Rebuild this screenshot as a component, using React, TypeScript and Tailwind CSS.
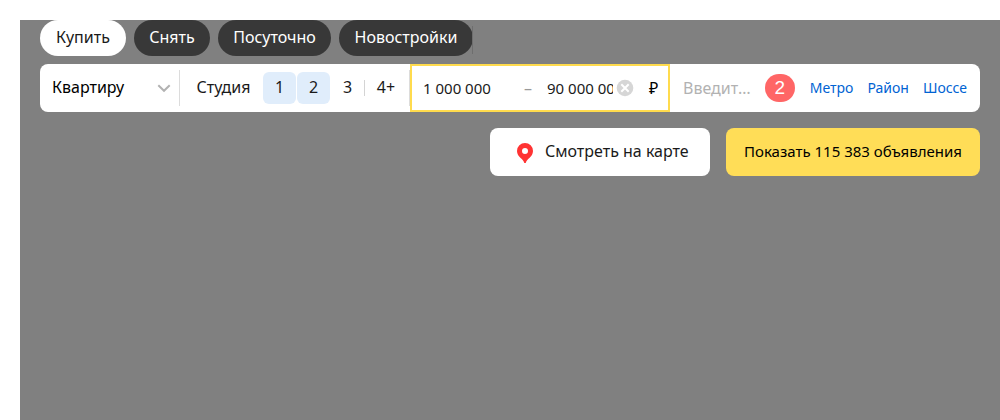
import { useState } from "react";

const deals = [
  { label: "Купить", size: "w-[86px]" },
  { label: "Снять", size: "w-[76px]" },
  { label: "Посуточно", size: "w-[113px]" },
  { label: "Новостройки", size: "w-[134px]" },
];
const rooms = [
  { label: "Студия", size: "w-[79px]" },
  { label: "1", size: "mr-px w-[33px]" },
  { label: "2", size: "mr-px w-[33px]" },
  { label: "3", size: "w-[33px]" },
  { label: "4+", size: "w-[42px]" },
];
const places = ["Метро", "Район", "Шоссе"];

function DealTabs() {
  const [active, setActive] = useState("Купить");
  return (
    <div className="flex">
      <div className="flex gap-2">
        {deals.map(({ label, size }) => (
          <button
            key={label}
            type="button"
            aria-pressed={label === active}
            onClick={() => setActive(label)}
            className={`h-9 rounded-full pb-0.5 whitespace-nowrap ${size} ${
              label === active ? "bg-white text-[#1a1a1a]" : "bg-[#383838] text-white"
            }`}
          >
            {label}
          </button>
        ))}
      </div>
      <span className="-ml-px mt-1.5 h-7 w-px bg-[#6e6e6e]" />
    </div>
  );
}

function TypeSelect() {
  return (
    <div className="relative flex w-[140px] shrink-0 items-center">
      <select
        aria-label="Тип недвижимости"
        className="h-12 w-full appearance-none bg-transparent pb-0.5 pl-3 text-black outline-none"
      >
        <option>Квартиру</option>
        <option>Комнату</option>
        <option>Дом</option>
      </select>
      <svg className="pointer-events-none absolute right-2 h-4 w-4" viewBox="0 0 16 16" fill="none" stroke="#b2b2b2" strokeWidth="2">
        <path d="M2.3 5.3 8 10.8l5.7-5.5" />
      </svg>
      <span className="absolute right-0 h-9 w-px bg-[#dcdcdc]" />
    </div>
  );
}

function RoomPicker() {
  const [picked, setPicked] = useState(["1", "2"]);
  const toggle = (label: string) =>
    setPicked(picked.includes(label) ? picked.filter((p) => p !== label) : [...picked, label]);
  return (
    <div className="relative flex w-[230px] shrink-0 items-center pl-1">
      {rooms.map(({ label, size }) => (
        <div key={label} className="flex items-center">
          {label === "4+" && <span className="h-4 w-px bg-[#d4d4d4]" />}
          <button
            type="button"
            aria-pressed={picked.includes(label)}
            onClick={() => toggle(label)}
            className={`h-8 rounded-md pb-0.5 text-[#1a1a1a] ${size} ${picked.includes(label) ? "bg-[#e0edfb]" : ""}`}
          >
            {label}
          </button>
        </div>
      ))}
      <span className="absolute right-0 h-9 w-px bg-[#dcdcdc]" />
    </div>
  );
}

function PriceRange() {
  return (
    <div className="flex w-[260px] shrink-0 items-center border-2 border-[#ffdb4d] pl-[11px] text-[#1a1a1a]">
      <input
        aria-label="Цена от"
        defaultValue="1 000 000"
        className="h-11 w-[101px] bg-transparent text-[15px] outline-none"
      />
      <span className="w-[23px] text-[#999999]">–</span>
      <input
        aria-label="Цена до"
        defaultValue="90 000 000"
        className="h-11 w-[66px] bg-transparent text-[15px] outline-none"
      />
      <button type="button" aria-label="Очистить цену" className="ml-1">
        <svg className="h-4 w-4 overflow-visible" viewBox="0 0 16 16">
          <circle cx="8" cy="8" r="8.300" fill="#d6d6d6" />
          <path d="m4.300 4.300 7.400 7.400m0-7.400-7.400 7.400" stroke="#fff" strokeWidth="2" />
        </svg>
      </button>
      <span className="ml-4 text-black">₽</span>
    </div>
  );
}

function PlaceSearch() {
  return (
    <div className="flex min-w-0 flex-1 items-center px-[13px]">
      <input
        aria-label="Место"
        placeholder="Введите адрес"
        className="h-12 w-0 min-w-0 flex-1 bg-transparent text-ellipsis outline-none placeholder:text-[#b2b2b2]"
      />
      <span className="ml-3.5 flex h-7 w-[30px] items-center justify-center rounded-full bg-[#ff6666] font-['Liberation_Sans',sans-serif] text-[19px] leading-7 text-white">
        2
      </span>
      <div className="ml-[15px] flex gap-3.5 text-sm text-[#0063d3]">
        {places.map((place) => (
          <a key={place} href="#">
            {place}
          </a>
        ))}
      </div>
    </div>
  );
}

export default function App() {
  return (
    <div className="flex min-h-screen bg-white pt-5 pl-5 font-['Noto_Sans',sans-serif] text-base">
      <main className="flex-1 bg-[#808080] px-5">
        <DealTabs />
        <form className="mt-2" onSubmit={(event) => event.preventDefault()}>
          <div className="flex h-12 rounded-lg bg-white">
            <TypeSelect />
            <RoomPicker />
            <PriceRange />
            <PlaceSearch />
          </div>
          <div className="mt-4 flex justify-end gap-4">
            <button type="button" className="flex h-12 w-[220px] items-center rounded-lg bg-white pl-[27px] text-[#1a1a1a]">
              <svg className="mt-0.5 h-5 w-4" viewBox="0 0 16 20">
                <path
                  fill="#ff3333"
                  fillRule="evenodd"
                  d="M8 0a8 8 0 0 0-8 8c0 3 1.600 5.200 3.600 6.900 1.700 1.400 3.100 2.600 3.700 5.100h1.400c.6-2.500 2-3.700 3.700-5.100C14.400 13.200 16 11 16 8a8 8 0 0 0-8-8Zm0 5a3 3 0 1 1 0 6 3 3 0 0 1 0-6Z"
                />
              </svg>
              <span className="ml-3 pb-0.5 whitespace-nowrap">Смотреть на карте</span>
            </button>
            <button
              type="submit"
              className="h-12 w-[254px] rounded-lg bg-[#ffdd57] pb-0.5 text-[15px] whitespace-nowrap text-black"
            >
              Показать 115 383 объявления
            </button>
          </div>
        </form>
      </main>
    </div>
  );
}
